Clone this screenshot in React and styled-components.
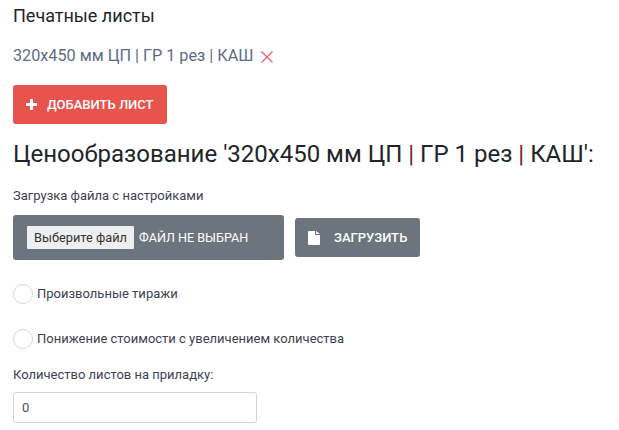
import React from "react";
import styled, { createGlobalStyle } from "styled-components";

const Global = createGlobalStyle`
  html, body { margin: 0; padding: 0; background: #fff; overflow: hidden; }
  body { font-family: Roboto, "Liberation Sans", sans-serif; color: #212529; }
`;
const Page = styled.div`
  width: 619px; height: 430px; box-sizing: border-box; padding: 5px 13px 0; overflow: hidden;
  display: flex; flex-direction: column; align-items: flex-start;
`;
const SectionTitle = styled.div`
  font-size: 18px; line-height: 21px; color: #212529;
`;
const SheetRow = styled.div`
  margin-top: 21px; height: 18px; display: flex; align-items: center; gap: 7px;
  font-size: 16.2px; line-height: 18px; color: #5f6b85;
`;
const Remove = styled.svg`
  width: 14px; height: 14px; stroke: #f25c66; stroke-width: 1.2; fill: none; margin-top: 2px; flex: none;
`;
const Button = styled.button`
  display: inline-flex; align-items: center; border: 0; border-radius: 3px; color: #fff;
  font: 500 13px/15px Roboto, sans-serif; height: 39px; padding: 0;
  background: ${p => p.$bg};
  width: ${p => p.$w}px;
  padding-left: ${p => p.$pl}px;
  gap: ${p => p.$gap}px;
  margin-top: ${p => p.$mt || 0}px;
`;
const Heading = styled.h2`
  margin: 16px 0 0; font-size: 24px; line-height: 29px; font-weight: 400; color: #212529;
`;
const Sep = styled.span` color: #6e1f2f; `;
const Small = styled.div`
  font-size: 13px; line-height: 15px; color: #3d4250; margin-top: ${p => p.$mt}px;
`;
const UploadRow = styled.div`
  display: flex; align-items: center; gap: 11px; margin-top: 12px;
`;
const FileBox = styled.div`
  width: 271px; height: 45px; box-sizing: border-box; background: #6c757d; border-radius: 3px;
  display: flex; align-items: center; padding-left: 14px; gap: 5px;
  color: #fff; font-size: 12.6px;
`;
const Choose = styled.span`
  display: block; background: #efefef; color: #333; height: 23px; width: 107px; text-align: center;
  font-size: 12.8px; line-height: 23px; border-radius: 1px;
`;
const RadioRow = styled.label`
  display: flex; align-items: center; gap: 4px; font-size: 13px; line-height: 15px; color: #3d4250;
  margin-top: ${p => p.$mt}px; height: 20px;
`;
const Radio = styled.span`
  width: 20px; height: 20px; box-sizing: border-box; border: 1px solid #d6d6d6; border-radius: 50%; background: #fff;
`;
const RadioText = styled.span` position: relative; top: -1px; `;
const NumberInput = styled.div`
  margin-top: 10px; width: 244px; height: 31px; box-sizing: border-box; border: 1px solid #ced4da; border-radius: 3px;
  padding-left: 8px; font-size: 13px; line-height: 29px; color: #495057; background: #fff;
`;

export default function App() {
  return (
    <Page>
      <Global />
      <SectionTitle>Печатные листы</SectionTitle>
      <SheetRow>
        320x450 мм ЦП | ГР 1 рез | КАШ
        <Remove viewBox="0 0 14 14"><path d="M1.5 1.5L12.5 12.5M12.5 1.5L1.5 12.5" /></Remove>
      </SheetRow>
      <Button $bg="#e7534d" $w={154} $pl={13} $gap={10} $mt={20}>
        <svg width="11" height="11" viewBox="0 0 11 11"><path d="M4 0h3v4h4v3H7v4H4V7H0V4h4z" fill="#fff" /></svg>
        ДОБАВИТЬ ЛИСТ
      </Button>
      <Heading>Ценообразование '320x450 мм ЦП <Sep>|</Sep> ГР 1 рез <Sep>|</Sep> КАШ':</Heading>
      <Small $mt={19}>Загрузка файла с настройками</Small>
      <UploadRow>
        <FileBox><Choose>Выберите файл</Choose>ФАЙЛ НЕ ВЫБРАН</FileBox>
        <Button $bg="#6c757d" $w={125} $pl={13} $gap={14}>
          <svg width="12" height="14" viewBox="0 0 12 14"><path d="M0 1a1 1 0 0 1 1-1h6v4h5v9a1 1 0 0 1-1 1H1a1 1 0 0 1-1-1zM8 0l4 3H8z" fill="#fff" /></svg>
          ЗАГРУЗИТЬ
        </Button>
      </UploadRow>
      <RadioRow $mt={24}><Radio /><RadioText>Произвольные тиражи</RadioText></RadioRow>
      <RadioRow $mt={25}><Radio /><RadioText>Понижение стоимости с увеличением количества</RadioText></RadioRow>
      <Small $mt={18}>Количество листов на приладку:</Small>
      <NumberInput>0</NumberInput>
    </Page>
  );
}
